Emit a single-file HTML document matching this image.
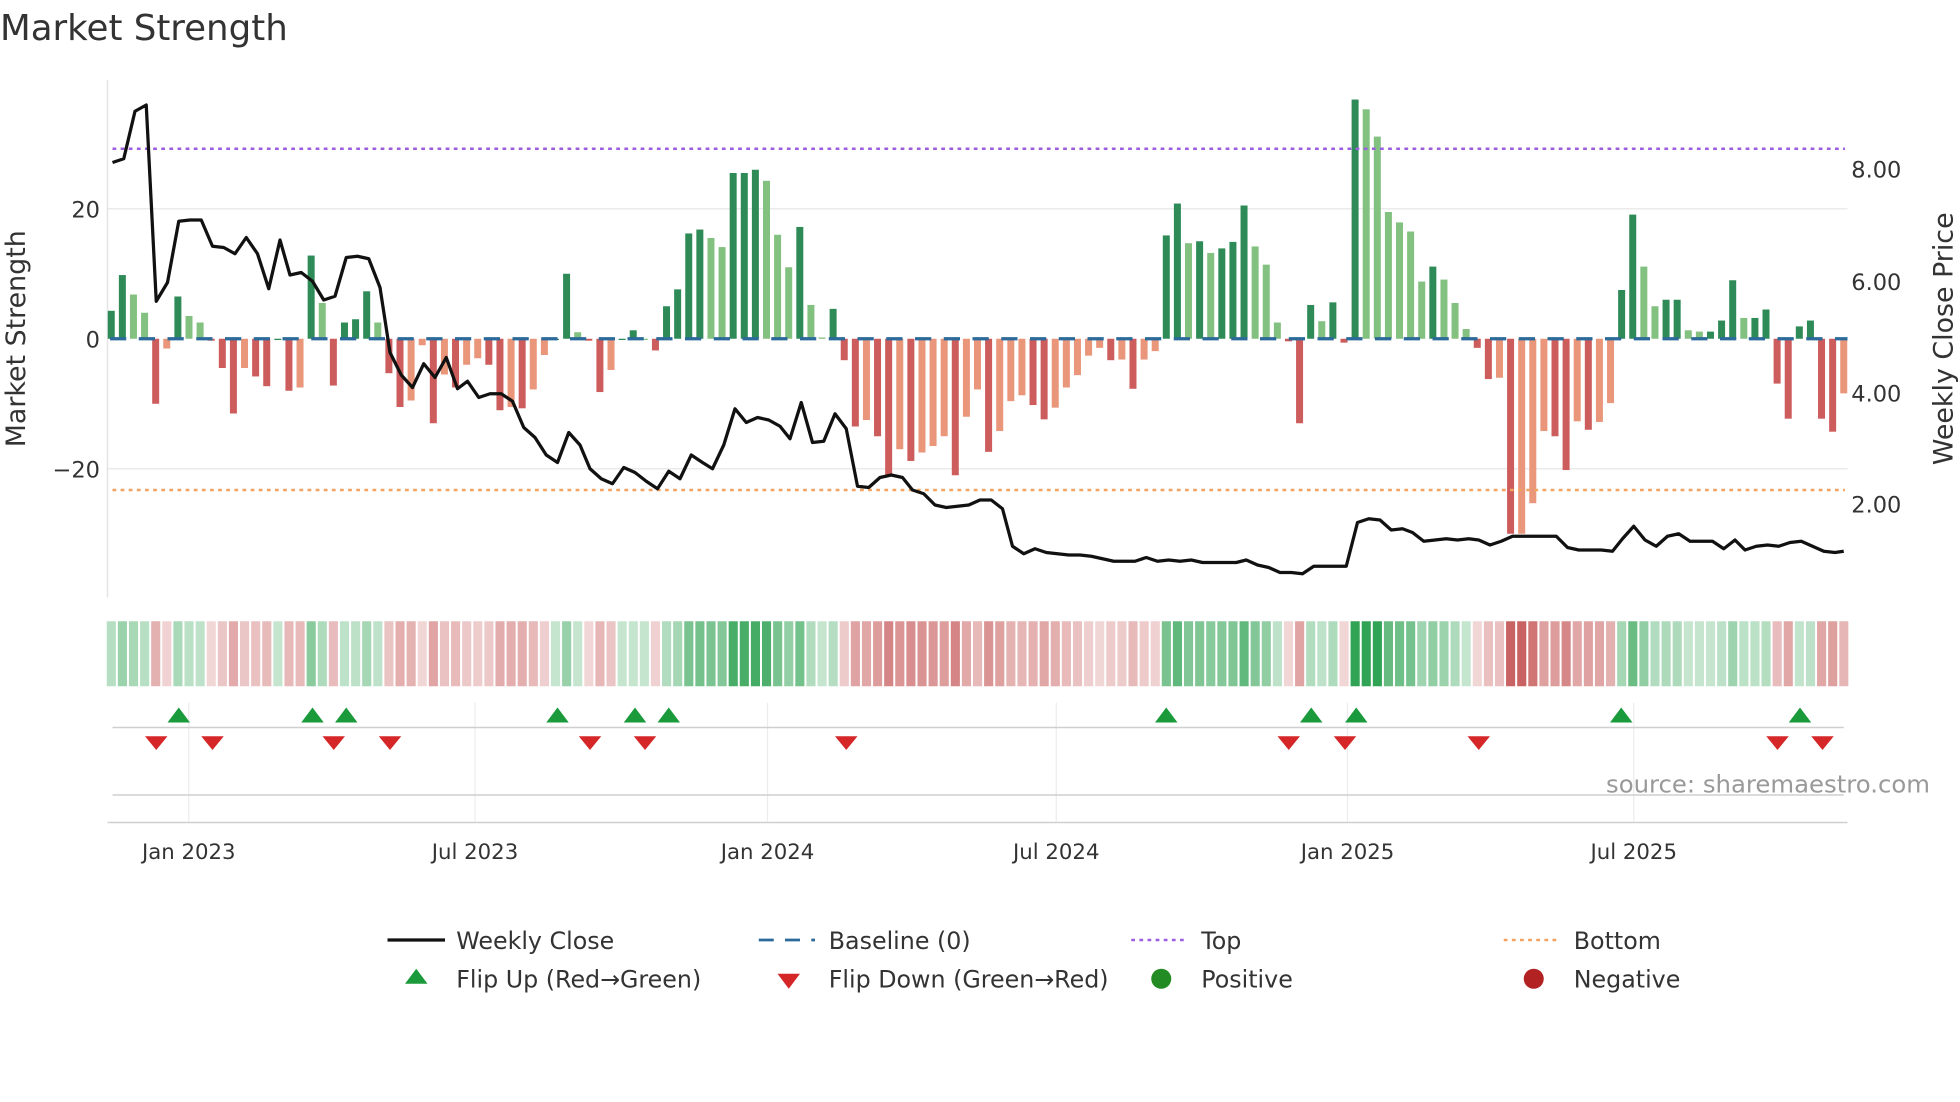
<!DOCTYPE html>
<html><head><meta charset="utf-8"><style>
html,body{margin:0;padding:0;background:#fff;}
svg{display:block;font-family:"DejaVu Sans","Liberation Sans",sans-serif;}
</style></head><body>
<svg id="s" width="1960" height="1102" viewBox="0 0 1568 881.6" xmlns="http://www.w3.org/2000/svg">
<text x="0" y="32" font-size="28.5" fill="#333">Market Strength</text>
<g stroke="#ebebeb" stroke-width="1.2">
<line x1="86" y1="167" x2="1478" y2="167"/>
<line x1="86" y1="375" x2="1478" y2="375"/>
</g>
<line x1="86" y1="64" x2="86" y2="478" stroke="#e4e4e4" stroke-width="1.2"/>
<g id="bars"></g>
<line x1="88" y1="271" x2="1478" y2="271" stroke="#2b6a9a" stroke-width="2.6" stroke-dasharray="13,10"/>
<line x1="90" y1="119" x2="1476" y2="119" stroke="#9b5fe0" stroke-width="2" stroke-dasharray="3,3.5"/>
<line x1="90" y1="392" x2="1476" y2="392" stroke="#f2a261" stroke-width="2" stroke-dasharray="3,3.5"/>
<polyline id="price" fill="none" stroke="#111" stroke-width="2.6" stroke-linejoin="round"/>
<g font-size="18" fill="#333">
<text x="80" y="174" text-anchor="end">20</text>
<text x="80" y="278" text-anchor="end">0</text>
<text x="80" y="382" text-anchor="end">−20</text>
<text x="1481" y="142">8.00</text>
<text x="1481" y="232">6.00</text>
<text x="1481" y="321">4.00</text>
<text x="1481" y="410">2.00</text>
<text transform="translate(20,271) rotate(-90)" text-anchor="middle" font-size="21.5">Market Strength</text>
<text transform="translate(1562,271) rotate(-90)" text-anchor="middle" font-size="21.5">Weekly Close Price</text>
</g>
<g id="strip"></g>
<g stroke="#ececec" stroke-width="1">
<line x1="151" y1="562" x2="151" y2="657"/><line x1="380" y1="562" x2="380" y2="657"/>
<line x1="614" y1="562" x2="614" y2="657"/><line x1="845" y1="562" x2="845" y2="657"/>
<line x1="1078" y1="562" x2="1078" y2="657"/><line x1="1307" y1="562" x2="1307" y2="657"/>
</g>
<line x1="90" y1="582" x2="1475" y2="582" stroke="#cfcfcf" stroke-width="1.2"/>
<line x1="90" y1="636" x2="1475" y2="636" stroke="#cfcfcf" stroke-width="1.2"/>
<line x1="86" y1="658" x2="1478" y2="658" stroke="#cfcfcf" stroke-width="1.2"/>
<g id="marks"></g>
<text x="1544" y="634" text-anchor="end" font-size="19.5" fill="#999">source: sharemaestro.com</text>
<g font-size="17" fill="#333" text-anchor="middle">
<text x="151" y="687">Jan 2023</text><text x="380" y="687">Jul 2023</text>
<text x="614" y="687">Jan 2024</text><text x="845" y="687">Jul 2024</text>
<text x="1078" y="687">Jan 2025</text><text x="1307" y="687">Jul 2025</text>
</g>
<g font-size="19" fill="#333">
<line x1="310" y1="752" x2="356" y2="752" stroke="#111" stroke-width="2.6"/>
<text x="365" y="759">Weekly Close</text>
<line x1="607" y1="752" x2="652" y2="752" stroke="#2b6a9a" stroke-width="2.2" stroke-dasharray="12,9"/>
<text x="663" y="759">Baseline (0)</text>
<line x1="905" y1="752" x2="950" y2="752" stroke="#9b5fe0" stroke-width="2" stroke-dasharray="3,3.5"/>
<text x="961" y="759">Top</text>
<line x1="1203" y1="752" x2="1248" y2="752" stroke="#f2a261" stroke-width="2" stroke-dasharray="3,3.5"/>
<text x="1259" y="759">Bottom</text>
<polygon points="333,775 324,787 342,787" fill="#1a9a3a"/>
<text x="365" y="790">Flip Up (Red→Green)</text>
<polygon points="622,779 640,779 631,791" fill="#d62728"/>
<text x="663" y="790">Flip Down (Green→Red)</text>
<circle cx="929" cy="783" r="8" fill="#238b23"/>
<text x="961" y="790">Positive</text>
<circle cx="1227" cy="783" r="8" fill="#b22222"/>
<text x="1259" y="790">Negative</text>
</g>
</svg>
<script>
var v=[4.3,9.8,6.8,4,-10,-1.5,6.5,3.5,2.5,-0.3,-4.5,-11.5,-4.5,-5.8,-7.3,0,-8,-7.5,12.8,5.5,-7.2,2.5,3,7.3,2.5,-5.3,-10.5,-9.5,-1,-13,-5.5,-7.5,-4,-3,-4,-11,-10.5,-10.7,-7.8,-2.5,0,10,1,-0.3,-8.2,-4.8,0,1.3,0,-1.8,5,7.6,16.2,16.8,15.5,14.1,25.5,25.5,26,24.3,16,11,17.2,5.2,0.2,4.6,-3.3,-13.5,-12.5,-15,-21,-17,-18.8,-17.5,-16.5,-15,-21,-12,-7.8,-17.4,-14.2,-9.6,-8.7,-10.2,-12.4,-10.6,-7.5,-5.6,-2.6,-1.4,-3.3,-3.2,-7.7,-3.2,-1.9,15.9,20.8,14.7,15,13.2,13.9,14.9,20.5,14.2,11.4,2.5,-0.4,-13,5.2,2.7,5.6,-0.6,36.8,35.3,31.1,19.5,17.9,16.5,8.8,11.1,9.1,5.5,1.5,-1.4,-6.2,-6,-30,-30,-25.3,-14.2,-15,-20.2,-12.7,-14,-12.8,-9.9,7.5,19.1,11.1,5,6,6,1.3,1.1,1.1,2.8,9,3.2,3.2,4.5,-6.9,-12.3,1.9,2.8,-12.3,-14.3,-8.4];
var n=v.length,st=(1475-89)/(n-1),NS="http://www.w3.org/2000/svg";
function el(p,t,a){var e=document.createElementNS(NS,t);for(var k in a)e.setAttribute(k,a[k]);p.appendChild(e);return e;}
var B=document.getElementById('bars'),S=document.getElementById('strip');
for(var i=0;i<n;i++){var x=89+st*i,val=v[i],pv=i?v[i-1]:0,c;
 if(val>=0)c=(val>=pv)?'#2e8b57':'#82c17f';else c=(val<pv)?'#cd5c5c':'#e9967a';
 var h=Math.abs(val)*5.2,y=val>=0?271-h:271;
 el(B,'rect',{x:x-2.8,y:y,width:5.6,height:Math.max(h,1),fill:c});
 var a=Math.min(1,0.25+Math.abs(val)/30*0.75);
 var sc=val>=0?'rgba(49,163,84,'+a+')':'rgba(192,70,70,'+a*0.85+')';
 if(Math.abs(val)<1.5)sc=val>=0?'rgba(49,163,84,0.28)':'rgba(192,70,70,0.22)';
 el(S,'rect',{x:x-3.6,y:497,width:st-1.6,height:52,fill:sc});
}
var p=[[90,130],[99,127],[108,89],[117,84],[125,241],[134,226],[143,177],[152,176],[161,176],[170,197],[179,198],[188,203],[197,190],[206,203],[215,231],[224,192],[232,220],[241,218],[250,225],[259,240],[268,237],[277,206],[286,205],[295,207],[304,230],[312,282],[321,300],[330,310],[339,291],[348,302],[357,286],[366,311],[374,305],[383,318],[392,315],[401,315],[410,321],[419,342],[428,350],[437,364],[446,370],[455,346],[464,356],[472,375],[481,383],[490,387],[499,374],[508,378],[517,385],[526,391],[535,377],[544,383],[553,364],[562,370],[570,375],[579,356],[588,327],[597,338],[606,334],[615,336],[624,341],[632,351],[641,322],[650,354],[659,353],[668,331],[677,343],[686,389],[695,390],[704,382],[713,380],[722,382],[730,392],[739,395],[748,404],[757,406],[766,405],[775,404],[784,400],[793,400],[802,407],[810,437],[819,443],[828,439],[837,442],[846,443],[855,444],[864,444],[873,445],[882,447],[891,449],[900,449],[908,449],[917,446],[926,449],[935,448],[944,449],[953,448],[962,450],[971,450],[980,450],[989,450],[997,448],[1006,452],[1015,454],[1024,458],[1033,458],[1042,459],[1051,453],[1060,453],[1069,453],[1077,453],[1086,418],[1095,415],[1104,416],[1113,424],[1122,423],[1130,426],[1139,433],[1148,432],[1157,431],[1166,432],[1175,431],[1183,432],[1192,436],[1201,433],[1210,429],[1219,429],[1228,429],[1236,429],[1245,429],[1254,438],[1263,440],[1272,440],[1281,440],[1290,441],[1298,431],[1307,421],[1316,432],[1325,437],[1334,429],[1343,427],[1352,433],[1361,433],[1370,433],[1379,439],[1388,432],[1396,440],[1405,437],[1414,436],[1423,437],[1432,434],[1441,433],[1450,437],[1459,441],[1468,442],[1475,441]];
document.getElementById('price').setAttribute('points',p.map(function(q){return q.join(',')}).join(' '));
var M=document.getElementById('marks');
[143,250,277,446,508,535,933,1049,1085,1297,1440].forEach(function(x){el(M,'polygon',{points:(x)+',566 '+(x-9)+',578 '+(x+9)+',578',fill:'#1a9a3a'});});
[125,170,267,312,472,516,677,1031,1076,1183,1422,1458].forEach(function(x){el(M,'polygon',{points:(x-9)+',589 '+(x+9)+',589 '+x+',600',fill:'#d62728'});});
</script>
</body></html>
